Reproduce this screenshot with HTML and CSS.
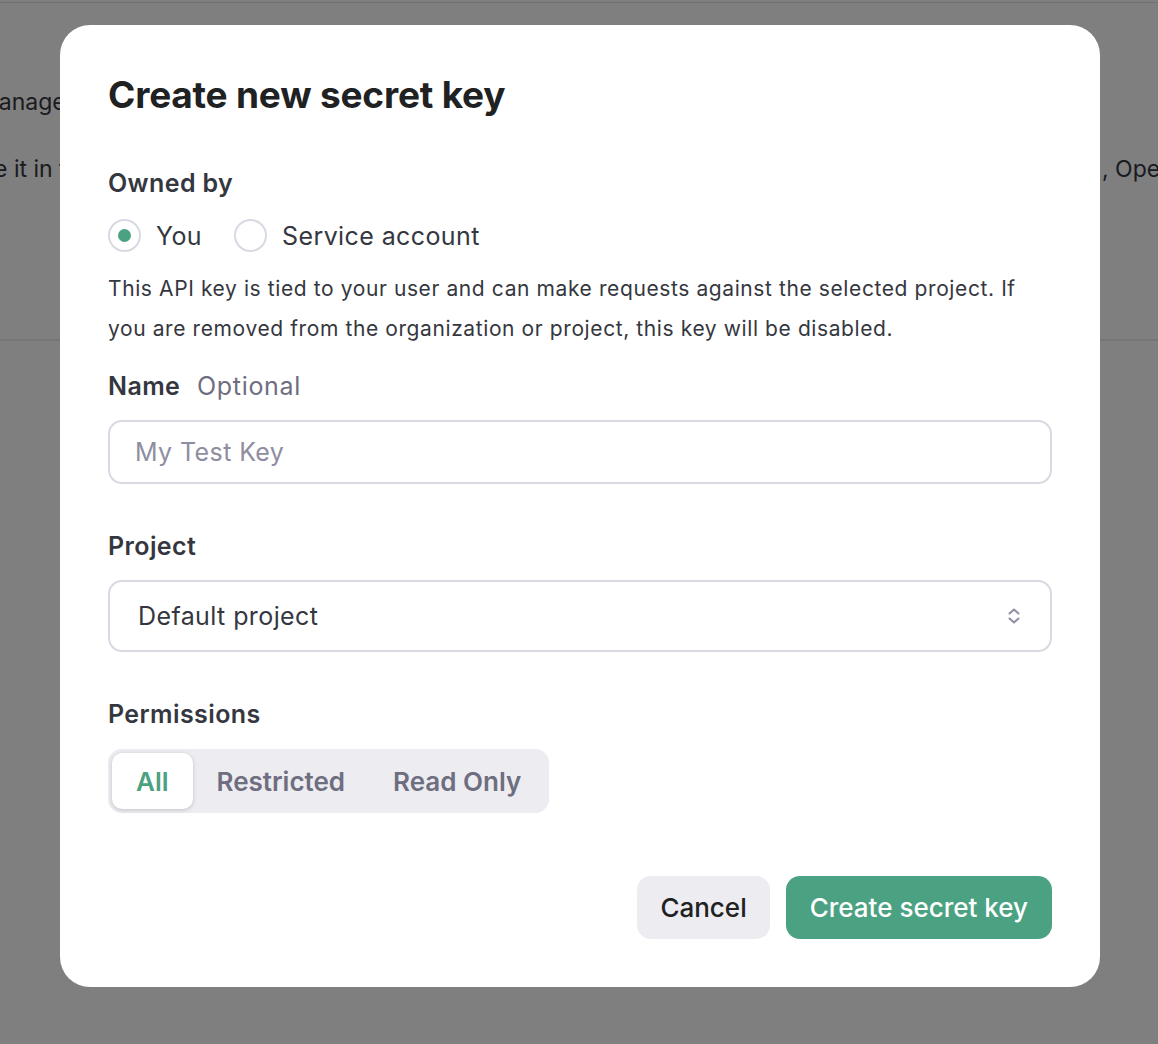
FILE: index.html
```html
<!DOCTYPE html>
<html lang="en">
<head>
	<meta charset="UTF-8">
	<title>Create new secret key</title>
	<link rel="stylesheet" href="styles.css">
</head>
<body>
	<div id="page">
		<div id="pagetop"></div>
		<div id="pagebody">
			<div class="pageline" id="line1">Manage your secret API keys below.</div>
			<div class="pageline" id="line2">
				<span id="line2left">e it in the browser or other client-side code. In order to protect the security of your account</span>
				<span id="line2right">, OpenAI may also automatically disable any API key that has leaked publicly.</span>
			</div>
		</div>
		<div id="pagerule"></div>
	</div>
	<div id="overlayer">
		<div id="modal">
			<div id="title">Create new secret key</div>
			<div class="label" id="ownedlabel">Owned by</div>
			<div id="radios">
				<div class="radio"><span class="radiodot checked"></span>You</div>
				<div class="radio"><span class="radiodot"></span>Service account</div>
			</div>
			<div id="desc">This API key is tied to your user and can make requests against the selected project. If you are removed from the organization or project, this key will be disabled.</div>
			<div class="label" id="namelabel">Name <span id="optional">Optional</span></div>
			<div class="field" id="namefield">My Test Key</div>
			<div class="label" id="projectlabel">Project</div>
			<div class="field" id="projectfield">
				<span>Default project</span>
				<svg width="16" height="20" viewBox="0 0 16 20" fill="none" stroke="#8e8ea0" stroke-width="2" stroke-linecap="round" stroke-linejoin="round"><path d="M3.5 7.5 8 3.5l4.5 4"/><path d="M3.5 12.5 8 16.5l4.5-4"/></svg>
			</div>
			<div class="label" id="permlabel">Permissions</div>
			<div id="segments">
				<div class="segment active">All</div>
				<div class="segment">Restricted</div>
				<div class="segment">Read Only</div>
			</div>
			<div id="actions">
				<div class="btn" id="cancel">Cancel</div>
				<div class="btn" id="create">Create secret key</div>
			</div>
		</div>
	</div>
</body>
</html>
```

FILE: styles.css
```css
*{
	box-sizing: border-box;
	font-family: Inter, "Noto Sans", sans-serif;
}
html, body{
	overflow: hidden;
}
body{
	margin: 0;
	background: #fff;
	color: #202123;
}
#pagetop{
	height: 3px;
	border-bottom: 1px solid #e0e0e0;
}
#pagebody{
	height: 336px;
	overflow: hidden;
}
.pageline{
	white-space: nowrap;
	font-size: 23px;
	color: #353740;
}
#line1{
	margin-top: 85px;
	text-indent: -22px;
}
#line2{
	margin-top: 39px;
	display: flex;
}
#line2left{
	flex: 0 0 1102px;
	overflow: hidden;
	text-indent: -6px;
}
#line2right{
	flex-shrink: 0;
}
#pagerule{
	border-top: 2px solid #ececf1;
}
#overlayer{
	position: fixed;
	top: 0;
	left: 0;
	width: 100vw;
	height: 100vh;
	background: rgba(0, 0, 0, 0.5);
	display: flex;
	justify-content: flex-start;
	align-items: flex-start;
	padding: 25px 0 0 60px;
}
#modal{
	width: 1040px;
	height: 962px;
	background: #fff;
	border-radius: 30px;
	padding: 48px;
	display: flex;
	flex-direction: column;
}
#title{
	font-size: 37px;
	font-weight: 700;
	letter-spacing: -0.2px;
	line-height: 44px;
	color: #202123;
}
.label{
	font-size: 25px;
	font-weight: 600;
	letter-spacing: 0.4px;
	color: #353740;
	line-height: 30px;
}
#ownedlabel{
	margin-top: 51px;
}
#radios{
	display: flex;
	gap: 32px;
	margin-top: 21px;
}
.radio{
	display: flex;
	align-items: center;
	gap: 15px;
	font-size: 25px;
	letter-spacing: 0.4px;
	color: #353740;
	line-height: 32px;
}
.radiodot{
	width: 33px;
	height: 33px;
	border-radius: 50%;
	border: 2px solid #d9d9e3;
	display: flex;
	align-items: center;
	justify-content: center;
}
.radiodot.checked::after{
	content: "";
	width: 13px;
	height: 13px;
	border-radius: 50%;
	background: #4ba282;
}
#desc{
	font-size: 21px;
	letter-spacing: 0.6px;
	line-height: 40px;
	color: #353740;
	margin-top: 17px;
}
#namelabel{
	margin-top: 22px;
}
#optional{
	font-weight: 400;
	color: #6e6e80;
	margin-left: 10px;
	letter-spacing: 0.7px;
}
.field{
	border: 2px solid #d9d9e3;
	border-radius: 14px;
	font-size: 25px;
	letter-spacing: 0.4px;
	display: flex;
	align-items: center;
}
#namefield{
	height: 64px;
	margin-top: 19px;
	padding-left: 25px;
	color: #8e8ea0;
}
#projectlabel{
	margin-top: 47px;
}
#projectfield{
	height: 72px;
	margin-top: 19px;
	padding: 0 28px 0 28px;
	justify-content: space-between;
	color: #353740;
}
#permlabel{
	margin-top: 47px;
}
#segments{
	display: flex;
	align-self: flex-start;
	margin-top: 20px;
	background: #ececf1;
	border-radius: 14px;
	padding: 4px;
}
.segment{
	font-size: 26px;
	font-weight: 600;
	color: #6e6e80;
	height: 56px;
	display: flex;
	align-items: center;
	padding: 0 24px;
	border-radius: 10px;
}
.segment.active{
	background: #fff;
	color: #4ba282;
	box-shadow: 0 1px 4px rgba(0, 0, 0, 0.18);
}
#actions{
	margin-top: auto;
	display: flex;
	justify-content: flex-end;
	gap: 16px;
}
.btn{
	height: 63px;
	border-radius: 14px;
	font-size: 26px;
	font-weight: 500;
	display: flex;
	align-items: center;
	padding: 0 24px;
}
#cancel{
	background: #ececf1;
	color: #202123;
	padding: 0 23px;
}
#create{
	background: #4ba282;
	color: #fff;
}
```
